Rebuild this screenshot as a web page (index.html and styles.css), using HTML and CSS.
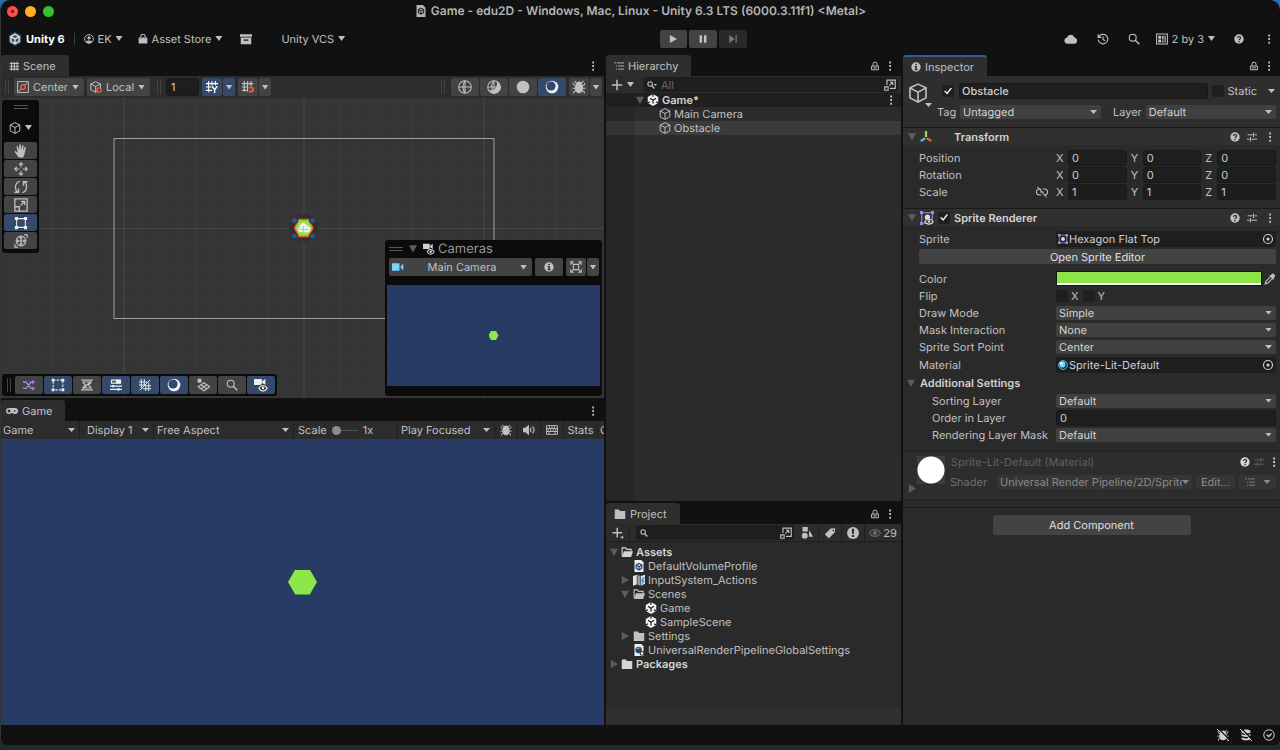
FILE: index.html
```html
<!DOCTYPE html>
<html lang="en">
<head>
    <meta charset="UTF-8">
    <meta name="viewport" content="width=device-width, initial-scale=1.0">
    <title>Game - edu2D - Windows, Mac, Linux - Unity 6.3 LTS</title>
    <link rel="stylesheet" href="styles.css">
</head>
<body>
    <!-- icon sprite -->
    <svg class="sprite" aria-hidden="true">
        <symbol id="i-dots" viewBox="0 0 16 16"><path fill="currentColor" d="M7 2h2.4v2.6H7zM7 6.8h2.4v2.6H7zM7 11.6h2.4v2.6H7z"/></symbol>
        <symbol id="i-lock" viewBox="0 0 16 16"><path fill="none" stroke="currentColor" stroke-width="1.6" d="M2.5 8h11v6h-11zM4.8 8V5a3.2 3.2 0 0 1 6.4 0v2.5M5 11h6"/></symbol>
        <symbol id="i-logo" viewBox="0 0 16 16"><path fill="#46515e" d="M8 0l7 4v8l-7 4-7-4V4z"/><path fill="none" stroke="#dfe6ec" stroke-width="1.5" d="M8 2.6l4.8 2.7v5.4L8 13.4l-4.8-2.7V5.3zM8 8v5M8 8L3.5 5.5M8 8l4.5-2.5"/></symbol>
        <symbol id="i-unity" viewBox="0 0 16 16"><path fill="#f0f0f0" d="M8 0l7 4v8l-7 4-7-4V4z"/><path stroke="#1c1c1c" stroke-width="1.6" fill="none" d="M8 8.2v4.6M8 8.2L4 5.8M8 8.2l4-2.4M8 0v3.6M1 12l3-1.8M15 12l-3-1.8"/></symbol>
        <symbol id="i-doc" viewBox="0 0 16 16"><path fill="#b4b4b4" d="M2 0h8.500L14 3.500V16H2z"/><path fill="none" stroke="#222" stroke-width="1.4" d="M8 4.200l3.500 2v4L8 12.300l-3.500-2.100v-4zM8 8.200v4M8 8.200L4.500 6.200M8 8.200l3.500-2"/></symbol>
        <symbol id="i-user" viewBox="0 0 16 16"><circle cx="8" cy="8" r="7" fill="none" stroke="currentColor" stroke-width="1.5"/><circle cx="8" cy="6.3" r="2.6" fill="currentColor"/><path fill="currentColor" d="M3.300 12.500c1-3 8.400-3 9.400 0A6.500 6.500 0 0 1 8 14.500a6.500 6.500 0 0 1-4.700-2z"/></symbol>
        <symbol id="i-bag" viewBox="0 0 16 16"><path fill="currentColor" d="M1 5.500h14V15H1z"/><path fill="none" stroke="currentColor" stroke-width="1.7" d="M4.500 7V4a3.500 3.500 0 0 1 7 0v3"/><path stroke="#111" stroke-width="1" d="M4.500 6v2M11.500 6v2"/></symbol>
        <symbol id="i-archive" viewBox="0 0 16 16"><path fill="currentColor" fill-rule="evenodd" d="M0 1.500h16V5H0zM1 6h14v9H1zm4 2.500v1.800h6V8.500z"/></symbol>
        <symbol id="i-play" viewBox="0 0 16 16"><path fill="currentColor" d="M3 1.500l11.500 6.500L3 14.500z"/></symbol>
        <symbol id="i-pause" viewBox="0 0 16 16"><path fill="currentColor" d="M2.500 2h4v12h-4zM9.500 2h4v12h-4z"/></symbol>
        <symbol id="i-step" viewBox="0 0 16 16"><path fill="currentColor" d="M2 1.500l9 6.500-9 6.500zM12 1.500h2v13h-2z"/></symbol>
        <symbol id="i-cloud" viewBox="0 0 16 16"><path fill="currentColor" d="M4 13.500a3.700 3.700 0 0 1-.6-7.300A4.600 4.600 0 0 1 12 6.300a3.700 3.700 0 0 1 .3 7.200z"/></symbol>
        <symbol id="i-history" viewBox="0 0 16 16"><path fill="none" stroke="currentColor" stroke-width="1.5" d="M2.200 5.500a6.400 6.400 0 1 1-.5 3.500M1.500 1.500v4.300h4.300M8 4.500V8.500l3 1.800"/></symbol>
        <symbol id="i-search" viewBox="0 0 16 16"><circle cx="6.3" cy="6.3" r="4.6" fill="none" stroke="currentColor" stroke-width="1.5"/><path stroke="currentColor" stroke-width="1.9" d="M9.700 9.700L15 15"/></symbol>
        <symbol id="i-search-small" viewBox="0 0 16 16"><circle cx="5" cy="6.5" r="3.6" fill="none" stroke="currentColor" stroke-width="1.7"/><path stroke="currentColor" stroke-width="2.2" d="M7.600 9.200l4.200 4.300"/></symbol>
        <symbol id="i-search-drop" viewBox="0 0 16 16"><use href="#i-search-small"/><path fill="currentColor" d="M10.500 6.500H16l-2.700 3z"/></symbol>
        <symbol id="i-layout" viewBox="0 0 16 16"><path fill="none" stroke="currentColor" stroke-width="1.4" d="M.8 1.300h14.400v13.400H.8z"/><path fill="currentColor" d="M3 3.500h4v4H3zM3 8.800h4v3.700H3zM8.200 3.500h2v5h-2zM11.400 3.500H13v9h-1.600zM8.200 10h2v2.500h-2z"/></symbol>
        <symbol id="i-help" viewBox="0 0 16 16"><circle cx="8" cy="8" r="7.5" fill="currentColor"/><path fill="none" stroke="#222" stroke-width="1.9" d="M5.500 6.400c0-3.200 5-3.200 5-.2 0 1.900-2.500 1.700-2.500 3.600"/><path fill="#222" d="M7 11h2v2H7z"/></symbol>
        <symbol id="i-info" viewBox="0 0 16 16"><circle cx="8" cy="8" r="7.5" fill="currentColor"/><path fill="#2a2a2a" d="M6.900 2.900h2.400v2.300H6.900zM5.800 6.400h3.500v5h1.200V13H5.700v-1.600h1.200V8H5.800z"/></symbol>
        <symbol id="i-alert" viewBox="0 0 16 16"><circle cx="8" cy="8" r="6.8" fill="currentColor"/><path fill="#222" d="M6.800 3.200h2.400l-.3 5.800H7.100zM6.900 10.400h2.200v2.200H6.900z"/></symbol>
        <symbol id="i-hash" viewBox="0 0 16 16"><path stroke="currentColor" stroke-width="1.7" d="M4 1v14M8.500 1v14M13 1v14M1 4h15M1 8.500h15M1 13h15"/></symbol>
        <symbol id="i-center" viewBox="0 0 16 16"><path fill="none" stroke="#c4c4c4" stroke-width="1.3" d="M.8.8h14.400v14.400H.8zM2.500 13.500l3-3M10.500 5.500l3-3"/><circle cx="8" cy="8" r="3" fill="none" stroke="#f0603a" stroke-width="1.9"/></symbol>
        <symbol id="i-local" viewBox="0 0 16 16"><path fill="none" stroke="#c4c4c4" stroke-width="1.3" d="M7.500 1L14 4v7l-6.500 4L1 11.500V4zM1 4l6.500 3.300L14 4M7.500 7.300V15"/><circle cx="12" cy="12" r="2.8" fill="#444" stroke="#f0603a" stroke-width="1.8"/></symbol>
        <symbol id="i-cube" viewBox="0 0 16 16"><path fill="none" stroke="currentColor" stroke-width="1.3" d="M8 .9l6.400 3v8L8 15.200l-6.400-3.300v-8zM1.600 3.900L8 7.300l6.400-3.400M8 7.300v7.900"/></symbol>
        <symbol id="i-gridy" viewBox="0 0 16 16"><path stroke="#fff" stroke-width="1.4" d="M3.500 0v15M8 0v6M12.500 0v6M0 3.500h16M0 8h7M0 12.500h8"/><path fill="none" stroke="#fff" stroke-width="2" d="M8 7l3.500 4.500L15 7M11.500 11v5"/></symbol>
        <symbol id="i-snap" viewBox="0 0 16 16"><path stroke="#c4c4c4" stroke-width="1.5" d="M3 0v14M7.500 0v14M12 0v7M0 3.500h15M0 8h8M0 12.500h7"/><path fill="none" stroke="#f0603a" stroke-width="2.4" d="M9.500 8.800h3a2.600 2.600 0 0 1 0 5.200h-3"/></symbol>
        <symbol id="i-wire" viewBox="0 0 16 16"><circle cx="8" cy="8" r="7.2" fill="none" stroke="currentColor" stroke-width="1.2"/><path fill="none" stroke="currentColor" stroke-width="1.2" d="M1 8h14M8 1v14M8 1c-3 3.500-3 10.500 0 14"/></symbol>
        <symbol id="i-shaded" viewBox="0 0 16 16"><path fill="currentColor" d="M11 1.500A7.300 7.300 0 1 1 1.500 11Q5 12.500 8.500 10.500 12.500 7.500 11 1.500z"/><circle cx="8" cy="8" r="7.2" fill="none" stroke="currentColor" stroke-width="1.2"/><path fill="none" stroke="currentColor" stroke-width="1.2" d="M1 8h10M8 1v10M8 1C5.500 3.500 5 8 6 11.500"/></symbol>
        <symbol id="i-solid" viewBox="0 0 16 16"><circle cx="8" cy="8" r="7.2" fill="currentColor"/></symbol>
        <symbol id="i-moon" viewBox="0 0 16 16"><circle cx="8" cy="8" r="7.2" fill="#efefef"/><circle cx="6.9" cy="6.9" r="5.2" fill="#30486d"/></symbol>
        <symbol id="i-bug" viewBox="0 0 16 16"><ellipse cx="8" cy="9.2" rx="4.8" ry="5.8" fill="currentColor"/><path fill="currentColor" d="M4.500 5C4.500.8 11.500.8 11.500 5z"/><path fill="none" stroke="currentColor" stroke-width="1.2" d="M5 4L3 1M11 4l2-3M4.500 7L1.500 5V3M11.500 7l3-2V3M4 9.500H.5M12 9.500h3.500M4.500 12L2 13.500V15.500M11.500 12l2.500 1.500v2"/></symbol>
        <symbol id="i-hand" viewBox="0 0 16 16"><path fill="currentColor" d="M5.500 15.500L1 9.300c-.5-1.200.7-1.700 1.500-.8l1.800 1.800L3 3.400c-.2-1.300 1.200-1.500 1.500-.3L5.800 7 6 1.500C6-.1 7.700-.1 7.800 1.500L8.200 7l1-5c.3-1.300 1.800-1 1.600.4L10.500 7.400l1.600-3.700c.5-1 1.700-.6 1.400.6L12 11.500l-1.500 4z"/></symbol>
        <symbol id="i-move" viewBox="0 0 16 16"><path fill="none" stroke="currentColor" stroke-width="1.3" d="M8 1v5M8 10v5M1 8h5M10 8h5M5.700 3.200L8 .9l2.300 2.300M5.700 12.800L8 15.100l2.300-2.300M3.200 5.700L.9 8l2.300 2.300M12.800 5.700L15.100 8l-2.300 2.300"/></symbol>
        <symbol id="i-rotate" viewBox="0 0 16 16"><path fill="none" stroke="currentColor" stroke-width="1.5" d="M6.500 1.500C1 3 0 10.500 4.500 14M.5 14h4.700V9.500M9.500 14.500C15 13 16 5.500 11.500 2M15.500 2h-4.700v4.500"/></symbol>
        <symbol id="i-scale" viewBox="0 0 16 16"><path fill="none" stroke="currentColor" stroke-width="1.5" d="M1 1h14v14H1zM1 10h5v5M7.500 8.500L12 4M8 3.800h4.200V8"/></symbol>
        <symbol id="i-rect" viewBox="0 0 16 16"><path fill="none" stroke="currentColor" stroke-width="1.2" d="M3 3h10v10H3z"/><path fill="currentColor" d="M1 1h3.500v3.500H1zM11.500 1H15v3.500h-3.500zM1 11.500h3.500V15H1zM11.500 11.500H15V15h-3.500z"/></symbol>
        <symbol id="i-rectdash" viewBox="0 0 16 16"><path fill="none" stroke="currentColor" stroke-width="1.3" stroke-dasharray="2.500 1.500" d="M2.500 2.500h11v11h-11z"/><path fill="currentColor" d="M.8.8H4V4H.8zM12 .8h3.200V4H12zM.8 12H4v3.200H.8zM12 12h3.200v3.200H12z"/></symbol>
        <symbol id="i-transform" viewBox="0 0 16 16"><circle cx="8" cy="8" r="5.5" fill="none" stroke="currentColor" stroke-width="1.3"/><path fill="none" stroke="currentColor" stroke-width="1.3" d="M8 3v10M3 8h10M6.500 5L8 3.500 9.500 5M6.500 11L8 12.500 9.500 11M5 6.500L3.500 8 5 9.500M11 6.500L12.500 8 11 9.500M11.500 1H15v3.500M4.500 15H1v-3.500"/></symbol>
        <symbol id="i-cameye" viewBox="0 0 16 16"><path fill="currentColor" d="M0 1h9v7H0zM9.500 3.500L13 1v7L9.500 5.800z"/><path fill="#222" d="M4.500 11c2-5 9-5 11 0-2 5.500-9 5.500-11 0z"/><path fill="none" stroke="currentColor" stroke-width="1.4" d="M5.500 11.500c2-3.800 7.500-3.800 9.500 0-2 4.500-7.500 4.500-9.500 0z"/><circle cx="10.3" cy="11.5" r="1.6" fill="currentColor"/></symbol>
        <symbol id="i-camera" viewBox="0 0 16 16"><path fill="#7bd3fb" d="M0 3h10v10H0zM11 8l4-5v10z"/></symbol>
        <symbol id="i-frame" viewBox="0 0 16 16"><path fill="none" stroke="currentColor" stroke-width="1.4" d="M1 5V1h4M11 1h4v4M15 11v4h-4M5 15H1v-4M4.500 4.500h7v7h-7zM1 1l3.500 3.500M15 1l-3.500 3.500M1 15l3.500-3.500M15 15l-3.500-3.500"/></symbol>
        <symbol id="i-shuffle" viewBox="0 0 16 16"><path fill="none" stroke="#a389ee" stroke-width="1.8" d="M0 4h4l7 8.500h4M0 12.500h4L11 4h4"/><path fill="#a389ee" d="M12.500 1L16 4l-3.500 3zM12.500 9.500l3.500 3-3.500 3z"/></symbol>
        <symbol id="i-measure" viewBox="0 0 16 16"><path fill="none" stroke="currentColor" stroke-width="1.5" d="M0 1.500h16M0 14.500h16M2 4h12M2 12h12M2 4l4 4-4 4M14 4l-4 4 4 4M3 13L13 3"/></symbol>
        <symbol id="i-sliders" viewBox="0 0 16 16"><path fill="none" stroke="currentColor" stroke-width="1.6" d="M2 1.500h12v4H2zM0 9.500h16M0 13.800h16"/><path fill="currentColor" d="M8 1h6v5H8zM3 8h2.500v3H3zM10 12h2.500v3.500H10z"/></symbol>
        <symbol id="i-gridcut" viewBox="0 0 16 16"><path fill="none" stroke="currentColor" stroke-width="1.3" d="M3 0v12M7 0v9M0 4h11M0 8h8M1 15L15 1M9 16V9M13 16V5M8 9h8M5 13h11"/></symbol>
        <symbol id="i-tiles" viewBox="0 0 16 16"><circle cx="4" cy="3" r="2.5" fill="currentColor"/><path fill="none" stroke="currentColor" stroke-width="1.3" d="M9 5.500l6.500 4.500L9 14.500 2.500 10zM5.700 7.800l6.600 4.500M12.300 7.800l-6.600 4.500"/></symbol>
        <symbol id="i-list" viewBox="0 0 16 16"><path stroke="currentColor" stroke-width="1.4" d="M0 3h3M4.500 3H16M3 8h2M6.500 8H16M3 13h2M6.500 13H16"/></symbol>
        <symbol id="i-plus" viewBox="0 0 16 16"><path stroke="currentColor" stroke-width="2" d="M8 1v14M1 8h14"/></symbol>
        <symbol id="i-plus-drop" viewBox="0 0 16 16"><path stroke="currentColor" stroke-width="2" d="M7 1v13M.5 7.500h13"/><path fill="currentColor" d="M11 12.500h5L13.500 16z"/></symbol>
        <symbol id="i-popout" viewBox="0 0 16 16"><path fill="none" stroke="currentColor" stroke-width="1.5" d="M4 8V1.500h11v11H8M1 10.500h4.500V15H1zM7 8.800L11.500 4.500M8 4.300h3.700V8"/></symbol>
        <symbol id="i-pad" viewBox="0 0 16 16"><path fill="currentColor" fill-rule="evenodd" d="M4 4h8a4 4 0 0 1 0 8c-2 0-2-1.500-4-1.500S6 12 4 12a4 4 0 0 1 0-8zm0 2a2 2 0 1 0 .01 4A2 2 0 0 0 4 6zm6.500 1v2h2V7z"/></symbol>
        <symbol id="i-speaker" viewBox="0 0 16 16"><path fill="currentColor" d="M0 5h3l5-4v14l-5-4H0z"/><path fill="none" stroke="currentColor" stroke-width="1.6" d="M10.300 5v6M12.500 3.500c3 2 3 7 0 9"/></symbol>
        <symbol id="i-keys" viewBox="0 0 16 16"><path fill="none" stroke="currentColor" stroke-width="1.2" d="M.7 2.200h14.600v11.600H.7zM1 6h14M1 10h14M4.500 2v4M8 2v4M11.500 2v4M3 6v4M6.300 6v4M9.600 6v4M13 6v4M4 10v4M12 10v4"/></symbol>
        <symbol id="i-axes" viewBox="0 0 16 16"><path stroke="#95e04c" stroke-width="3" d="M8 0v8"/><path stroke="#5cb8e8" stroke-width="3" d="M7 9.500l-6 4"/><path stroke="#f0603a" stroke-width="3" d="M9 9.500l6 4"/></symbol>
        <symbol id="i-preset" viewBox="0 0 16 16"><path stroke="currentColor" stroke-width="1.6" d="M1 4.500h8M12 4.500h4M10.500 1v7M0 11.500h4M7 11.500h9M5.500 8v7"/></symbol>
        <symbol id="i-unlink" viewBox="0 0 16 16"><path fill="none" stroke="currentColor" stroke-width="1.4" d="M7 4H4.500a3.700 3.700 0 0 0 0 8H7M9 4h2.500a3.700 3.700 0 0 1 0 8M5.500 8H10M2 1l12 14"/></symbol>
        <symbol id="i-srender" viewBox="0 0 16 16"><path fill="none" stroke="#a389ee" stroke-width="1.3" d="M2 2h12v12H2z"/><path fill="#a389ee" d="M0 0h3.400v3.400H0zM12.600 0H16v3.400h-3.400zM0 12.600h3.400V16H0z"/><circle cx="8.5" cy="7" r="3" fill="#ddd"/><path fill="#303030" stroke="#ddd" stroke-width="1.3" d="M5.500 12c2-3.500 7.500-3.500 9.500 0-2 4-7.500 4-9.500 0z"/><circle cx="10.3" cy="12" r="1.5" fill="#ddd"/></symbol>
        <symbol id="i-spr" viewBox="0 0 16 16"><path fill="none" stroke="#a389ee" stroke-width="1.3" d="M2 2h12v12H2z"/><path fill="#a389ee" d="M0 0h4v4H0zM12 0h4v4h-4zM0 12h4v4H0zM12 12h4v4h-4z"/><circle cx="8" cy="8" r="3.2" fill="#ddd"/></symbol>
        <symbol id="i-target" viewBox="0 0 16 16"><circle cx="8" cy="8" r="6" fill="none" stroke="currentColor" stroke-width="1.5"/><circle cx="8" cy="8" r="2.1" fill="currentColor"/></symbol>
        <symbol id="i-dropper" viewBox="0 0 16 16"><path fill="currentColor" d="M10 1.500c2-2.500 6.500 1.500 4 4L12.500 7l1 1-1.300 1.300-5.500-5.500L8 2.500l1 .8z"/><path fill="none" stroke="currentColor" stroke-width="1.5" d="M7.800 5.700L2.500 11 1.500 14.500 5 13.500l5.300-5.300"/></symbol>
        <symbol id="i-ball" viewBox="0 0 16 16"><circle cx="8" cy="8" r="7" fill="#14252f" stroke="#7bd3fb" stroke-width="1.3"/><circle cx="7" cy="7" r="5" fill="#7bd3fb"/><circle cx="5.5" cy="5.5" r="1.8" fill="#fff"/></symbol>
        <symbol id="i-folder" viewBox="0 0 16 16"><path fill="currentColor" d="M1 2h5.500L8 4h7v10.500H1z"/></symbol>
        <symbol id="i-folder-open" viewBox="0 0 16 16"><path fill="none" stroke="currentColor" stroke-width="1.5" d="M1.500 13V2.500h4.500l1.500 2h6V7"/><path fill="currentColor" d="M4 7h12l-2.500 7.500H1z"/></symbol>
        <symbol id="i-profile" viewBox="0 0 16 16"><path fill="#f0f0f0" d="M2 0h9l3 3v13H2z"/><path fill="#a9c8e8" stroke="#26415f" stroke-width="1.5" d="M8 4.500l3.800 2v4.500L8 13.500 4.200 11V6.500zM4.200 6.500L8 9l3.800-2.500M8 9v4.500"/></symbol>
        <symbol id="i-rpasset" viewBox="0 0 16 16"><path fill="#f0f0f0" d="M2 0h9l3 3v13H2z"/><circle cx="7.5" cy="8" r="4.3" fill="#24466e"/><path fill="#7bb8f0" d="M5 7c0-3 4-3 4-1z"/><circle cx="12" cy="12.5" r="2.5" fill="#eee" stroke="#333" stroke-width="1.4"/></symbol>
        <symbol id="i-actions" viewBox="0 0 16 16"><path fill="#e4e4e4" d="M0 2.500l5-1.500v13l-5 1.500z"/><path fill="#9a9a9a" d="M5.800 1l4 1.500v13l-4-1.500z"/><path fill="#e4e4e4" d="M10.500 2.500L16 1v12l-5.500 2.500z"/><path fill="#2f9be0" d="M13.500 4l-3.500 6h2.500L11 16l5-7.500h-2.500L15.500 4z"/></symbol>
        <symbol id="i-shapes" viewBox="0 0 16 16"><path fill="currentColor" d="M2 0h7v6H2zM11 4l5 9h-5.500z"/><circle cx="5" cy="11.5" r="4" fill="currentColor"/></symbol>
        <symbol id="i-tag" viewBox="0 0 16 16"><path fill="currentColor" fill-rule="evenodd" d="M9 2l6-.5L14.500 7l-8 8L1 9.800zm2.500 1.500v2h2v-2z"/></symbol>
        <symbol id="i-eye" viewBox="0 0 16 16"><path fill="none" stroke="currentColor" stroke-width="1.5" d="M.7 8c3-6 11.600-6 14.600 0-3 6-11.600 6-14.600 0z"/><circle cx="8" cy="8" r="3" fill="currentColor"/></symbol>
        <symbol id="i-bugoff" viewBox="0 0 16 16"><use href="#i-bug"/><path stroke="#111" stroke-width="1.6" d="M2.500 0l13.500 13.500"/><path stroke="currentColor" stroke-width="1.3" d="M0 0l16 16"/></symbol>
        <symbol id="i-dboff" viewBox="0 0 16 16"><path fill="currentColor" d="M2 3c0-3 12-3 12 0v1.500c-1 2-11 2-12 0zM2 6.500c3 2 9 2 12 0V9c-2 2-10 2-12 0zM2 11c3 2 9 2 12 0v2c-1 3-11 3-12 0z"/><path stroke="#111" stroke-width="1.6" d="M2.500 0l13.500 13.500"/><path stroke="currentColor" stroke-width="1.3" d="M0 0l16 16"/></symbol>
        <symbol id="i-ok" viewBox="0 0 16 16"><circle cx="8" cy="8" r="7" fill="none" stroke="currentColor" stroke-width="1.3"/><path fill="none" stroke="currentColor" stroke-width="1.7" d="M4.800 7.500L7.500 10l4-4"/></symbol>
    </svg>

    <div class="window">
        <header class="titlebar">
            <div class="lights"><span class="light close"></span><span class="light min"></span><span class="light max"></span></div>
            <h1 class="title"><svg class="ico"><use href="#i-doc"/></svg>Game - edu2D - Windows, Mac, Linux - Unity 6.3 LTS (6000.3.11f1) &lt;Metal&gt;</h1>
        </header>

        <nav class="topbar">
            <div class="topbar-left">
                <span class="brand"><svg class="ico big"><use href="#i-logo"/></svg>Unity 6</span>
                <span class="sep"></span>
                <button class="flat"><svg class="ico small"><use href="#i-user"/></svg>EK<span class="caret"></span></button>
                <button class="flat"><svg class="ico small"><use href="#i-bag"/></svg>Asset Store<span class="caret"></span></button>
                <button class="flat packages" aria-label="Package Manager"><svg class="ico"><use href="#i-archive"/></svg></button>
                <button class="flat vcs">Unity VCS<span class="caret"></span></button>
            </div>
            <div class="playbar">
                <button class="btn" aria-label="Play"><svg class="ico small"><use href="#i-play"/></svg></button>
                <button class="btn" aria-label="Pause"><svg class="ico small"><use href="#i-pause"/></svg></button>
                <button class="btn off" aria-label="Step"><svg class="ico small"><use href="#i-step"/></svg></button>
            </div>
            <div class="topbar-right">
                <button class="flat" aria-label="Cloud"><svg class="ico big"><use href="#i-cloud"/></svg></button>
                <button class="flat" aria-label="History"><svg class="ico"><use href="#i-history"/></svg></button>
                <button class="flat" aria-label="Search"><svg class="ico"><use href="#i-search"/></svg></button>
                <button class="flat layout"><svg class="ico"><use href="#i-layout"/></svg>2 by 3<span class="caret"></span></button>
                <button class="flat" aria-label="Help"><svg class="ico small"><use href="#i-help"/></svg></button>
                <button class="flat" aria-label="More"><svg class="ico"><use href="#i-dots"/></svg></button>
            </div>
        </nav>

        <main class="workspace">
            <div class="column left">
                <section class="panel scene">
                    <div class="tabs">
                        <h2 class="tab"><svg class="ico small"><use href="#i-hash"/></svg>Scene</h2>
                        <button class="flat" aria-label="Scene menu"><svg class="ico"><use href="#i-dots"/></svg></button>
                    </div>
                    <div class="scene-tools">
                        <span class="grip"></span>
                        <button class="btn text"><svg class="ico"><use href="#i-center"/></svg>Center<span class="caret"></span></button>
                        <button class="btn text"><svg class="ico"><use href="#i-local"/></svg>Local<span class="caret"></span></button>
                        <span class="grip mid"></span>
                        <input class="field snap-size" type="text" value="1" aria-label="Grid size">
                        <div class="pair">
                            <button class="btn on" aria-label="Grid"><svg class="ico"><use href="#i-gridy"/></svg></button>
                            <button class="btn on drop" aria-label="Grid options"><span class="caret"></span></button>
                        </div>
                        <div class="pair">
                            <button class="btn" aria-label="Snap"><svg class="ico"><use href="#i-snap"/></svg></button>
                            <button class="btn drop" aria-label="Snap options"><span class="caret"></span></button>
                        </div>
                        <span class="grip end"></span>
                        <div class="strip">
                            <button class="btn" aria-label="Wireframe"><svg class="ico big"><use href="#i-wire"/></svg></button>
                            <button class="btn" aria-label="Shaded wireframe"><svg class="ico big"><use href="#i-shaded"/></svg></button>
                            <button class="btn" aria-label="Unlit"><svg class="ico big"><use href="#i-solid"/></svg></button>
                            <button class="btn on" aria-label="Shaded"><svg class="ico big"><use href="#i-moon"/></svg></button>
                        </div>
                        <div class="pair">
                            <button class="btn" aria-label="Debug"><svg class="ico big"><use href="#i-bug"/></svg></button>
                            <button class="btn drop" aria-label="Debug options"><span class="caret"></span></button>
                        </div>
                    </div>
                    <div class="canvas">
                        <svg class="grid" viewBox="0 0 604 300" preserveAspectRatio="xMidYMid slice">
                            <defs>
                                <pattern id="minor" x="15" y="4" width="18" height="18" patternUnits="userSpaceOnUse"><path d="M.5 0v18M0 .5h18" stroke="#3a3a3a" fill="none"/></pattern>
                                <pattern id="major" x="123" y="130" width="180" height="180" patternUnits="userSpaceOnUse"><path d="M.5 0v180M0 .5h180" stroke="#464646" fill="none"/></pattern>
                            </defs>
                            <rect width="604" height="300" fill="url(#minor)"/>
                            <rect width="604" height="300" fill="url(#major)"/>
                            <path d="M113.500 40.500h380v180h-380z" fill="none" stroke="#a0a0a0"/>
                            <circle cx="303" cy="130" r="14" fill="#303030"/>
                            <path d="M294 130l4.500-8.500h9.500l4.500 8.500-4.500 8.500h-9.500z" fill="#8ce446" stroke="#f0541e" stroke-width="1.5"/>
                            <path d="M299 134a3 3 0 0 1 0-5c0-5 7-5 8-1 4 1 4 6 0 6.500z" fill="#e8f0ea"/>
                            <path d="M303 128v8M299 131.500h9" stroke="#b9c7be"/>
                            <g fill="#36527f" stroke="#20304c"><circle cx="294" cy="122.500" r="3"/><circle cx="312" cy="122.500" r="3"/><circle cx="294" cy="138" r="3"/><circle cx="312" cy="138" r="3"/></g>
                        </svg>

                        <div class="overlay tools">
                            <span class="handle"></span>
                            <button class="flat view" aria-label="View options"><svg class="ico"><use href="#i-cube"/></svg><span class="caret"></span></button>
                            <button class="btn" aria-label="View"><svg class="ico big"><use href="#i-hand"/></svg></button>
                            <button class="btn" aria-label="Move"><svg class="ico big"><use href="#i-move"/></svg></button>
                            <button class="btn" aria-label="Rotate"><svg class="ico big"><use href="#i-rotate"/></svg></button>
                            <button class="btn" aria-label="Scale"><svg class="ico big"><use href="#i-scale"/></svg></button>
                            <button class="btn on" aria-label="Rect"><svg class="ico big"><use href="#i-rect"/></svg></button>
                            <button class="btn" aria-label="Transform"><svg class="ico big"><use href="#i-transform"/></svg></button>
                        </div>

                        <div class="overlay modes">
                            <span class="grip"></span>
                            <button class="btn" aria-label="Random"><svg class="ico"><use href="#i-shuffle"/></svg></button>
                            <button class="btn on" aria-label="Bounds"><svg class="ico big"><use href="#i-rectdash"/></svg></button>
                            <button class="btn" aria-label="Measure"><svg class="ico"><use href="#i-measure"/></svg></button>
                            <button class="btn on" aria-label="Options"><svg class="ico"><use href="#i-sliders"/></svg></button>
                            <button class="btn on" aria-label="Grid"><svg class="ico"><use href="#i-gridcut"/></svg></button>
                            <button class="btn on" aria-label="Lighting"><svg class="ico big"><use href="#i-moon"/></svg></button>
                            <button class="btn" aria-label="Tiles"><svg class="ico big"><use href="#i-tiles"/></svg></button>
                            <button class="btn" aria-label="Search"><svg class="ico"><use href="#i-search"/></svg></button>
                            <button class="btn on" aria-label="Cameras"><svg class="ico big"><use href="#i-cameye"/></svg></button>
                        </div>

                        <div class="overlay cameras">
                            <div class="cameras-title"><span class="handle"></span><span class="fold open"></span><svg class="ico"><use href="#i-cameye"/></svg>Cameras</div>
                            <div class="cameras-tools">
                                <button class="btn pick"><svg class="ico"><use href="#i-camera"/></svg><span class="pick-name">Main Camera</span><span class="caret"></span></button>
                                <button class="btn wide" aria-label="Info"><svg class="ico small"><use href="#i-info"/></svg></button>
                                <div class="pair">
                                    <button class="btn" aria-label="Frame"><svg class="ico"><use href="#i-frame"/></svg></button>
                                    <button class="btn drop" aria-label="Frame options"><span class="caret"></span></button>
                                </div>
                            </div>
                            <div class="preview"><span class="hexagon tiny"></span></div>
                        </div>
                    </div>
                </section>

                <section class="panel game">
                    <div class="tabs">
                        <h2 class="tab"><svg class="ico"><use href="#i-pad"/></svg>Game</h2>
                        <button class="flat" aria-label="Game menu"><svg class="ico"><use href="#i-dots"/></svg></button>
                    </div>
                    <div class="game-tools">
                        <div class="select w-game"><select aria-label="View"><option>Game</option></select></div>
                        <div class="select w-display"><select aria-label="Display"><option>Display 1</option></select></div>
                        <div class="select w-aspect"><select aria-label="Aspect"><option>Free Aspect</option></select></div>
                        <label class="zoom">Scale<input type="range" min="1" max="5" value="1"><span>1x</span></label>
                        <div class="select w-focus"><select aria-label="Focus"><option>Play Focused</option></select></div>
                        <button class="cell" aria-label="Debug"><svg class="ico"><use href="#i-bug"/></svg></button>
                        <button class="cell" aria-label="Audio"><svg class="ico"><use href="#i-speaker"/></svg></button>
                        <button class="cell" aria-label="Shortcuts"><svg class="ico"><use href="#i-keys"/></svg></button>
                        <button class="cell stats">Stats</button>
                        <button class="cell gizmos">Gizmos</button>
                    </div>
                    <div class="game-view"><span class="hexagon"></span></div>
                </section>
            </div>

            <div class="column middle">
                <section class="panel hierarchy">
                    <div class="tabs">
                        <h2 class="tab"><svg class="ico small"><use href="#i-list"/></svg>Hierarchy</h2>
                        <button class="flat" aria-label="Lock"><svg class="ico small"><use href="#i-lock"/></svg></button>
                        <button class="flat" aria-label="Hierarchy menu"><svg class="ico"><use href="#i-dots"/></svg></button>
                    </div>
                    <div class="search-tools">
                        <button class="flat add" aria-label="Create"><svg class="ico"><use href="#i-plus"/></svg><span class="caret"></span></button>
                        <label class="search"><svg class="ico small"><use href="#i-search-drop"/></svg><input type="text" placeholder="All" aria-label="Search hierarchy"><svg class="ico"><use href="#i-popout"/></svg></label>
                    </div>
                    <ul class="tree objects">
                        <li class="root"><span class="fold open"></span><svg class="ico"><use href="#i-unity"/></svg><span class="name">Game*</span><svg class="ico menu"><use href="#i-dots"/></svg></li>
                        <li class="child"><svg class="ico"><use href="#i-cube"/></svg>Main Camera</li>
                        <li class="child selected"><svg class="ico"><use href="#i-cube"/></svg>Obstacle</li>
                    </ul>
                </section>

                <section class="panel project">
                    <div class="tabs">
                        <h2 class="tab"><svg class="ico"><use href="#i-folder"/></svg>Project</h2>
                        <button class="flat" aria-label="Lock"><svg class="ico small"><use href="#i-lock"/></svg></button>
                        <button class="flat" aria-label="Project menu"><svg class="ico"><use href="#i-dots"/></svg></button>
                    </div>
                    <div class="search-tools ruled">
                        <button class="cell plus" aria-label="Create"><svg class="ico"><use href="#i-plus-drop"/></svg></button>
                        <label class="search"><svg class="ico small"><use href="#i-search-small"/></svg><input type="text" aria-label="Search project"><svg class="ico"><use href="#i-popout"/></svg></label>
                        <button class="cell" aria-label="By type"><svg class="ico"><use href="#i-shapes"/></svg></button>
                        <button class="cell" aria-label="By label"><svg class="ico"><use href="#i-tag"/></svg></button>
                        <button class="cell" aria-label="Log"><svg class="ico big"><use href="#i-alert"/></svg></button>
                        <button class="cell count"><svg class="ico"><use href="#i-eye"/></svg>29</button>
                    </div>
                    <ul class="tree assets">
                        <li class="bold"><span class="fold open"></span><svg class="ico"><use href="#i-folder-open"/></svg>Assets</li>
                        <li class="l1"><svg class="ico"><use href="#i-profile"/></svg>DefaultVolumeProfile</li>
                        <li class="l1"><span class="fold"></span><svg class="ico"><use href="#i-actions"/></svg>InputSystem_Actions</li>
                        <li class="l1"><span class="fold open"></span><svg class="ico"><use href="#i-folder-open"/></svg>Scenes</li>
                        <li class="l2"><svg class="ico"><use href="#i-unity"/></svg>Game</li>
                        <li class="l2"><svg class="ico"><use href="#i-unity"/></svg>SampleScene</li>
                        <li class="l1"><span class="fold"></span><svg class="ico"><use href="#i-folder"/></svg>Settings</li>
                        <li class="l1"><svg class="ico"><use href="#i-rpasset"/></svg>UniversalRenderPipelineGlobalSettings</li>
                        <li class="bold"><span class="fold"></span><svg class="ico"><use href="#i-folder"/></svg>Packages</li>
                    </ul>
                    <div class="project-foot"></div>
                </section>
            </div>

            <section class="panel inspector">
                <div class="tabs">
                    <h2 class="tab focused"><svg class="ico small"><use href="#i-info"/></svg>Inspector</h2>
                    <button class="flat" aria-label="Lock"><svg class="ico small"><use href="#i-lock"/></svg></button>
                    <button class="flat" aria-label="Inspector menu"><svg class="ico"><use href="#i-dots"/></svg></button>
                </div>

                <div class="object-head">
                    <div class="object-icon"><svg class="ico huge"><use href="#i-cube"/></svg><span class="caret"></span></div>
                    <div class="object-rows">
                        <div class="object-row">
                            <input class="tick" type="checkbox" checked aria-label="Active">
                            <input class="field name" type="text" value="Obstacle" aria-label="Name">
                            <label class="static"><input class="tick" type="checkbox">Static</label>
                            <span class="caret"></span>
                        </div>
                        <div class="object-row">
                            <label class="tag-label" for="tag">Tag</label>
                            <div class="select box w-tag"><select id="tag"><option>Untagged</option></select></div>
                            <label class="layer-label" for="layer">Layer</label>
                            <div class="select box grow"><select id="layer"><option>Default</option></select></div>
                        </div>
                    </div>
                </div>

                <div class="comp-head">
                    <span class="fold open"></span><svg class="ico"><use href="#i-axes"/></svg><span class="tick-gap"></span>
                    <h3>Transform</h3>
                    <svg class="ico small"><use href="#i-help"/></svg><svg class="ico small"><use href="#i-preset"/></svg><svg class="ico"><use href="#i-dots"/></svg>
                </div>
                <div class="comp-body">
                    <div class="prop"><span>Position</span><div class="vector"><label>X<input class="field" type="text" value="0"></label><label>Y<input class="field" type="text" value="0"></label><label>Z<input class="field" type="text" value="0"></label></div></div>
                    <div class="prop"><span>Rotation</span><div class="vector"><label>X<input class="field" type="text" value="0"></label><label>Y<input class="field" type="text" value="0"></label><label>Z<input class="field" type="text" value="0"></label></div></div>
                    <div class="prop"><span class="linked">Scale<svg class="ico"><use href="#i-unlink"/></svg></span><div class="vector"><label>X<input class="field" type="text" value="1"></label><label>Y<input class="field" type="text" value="1"></label><label>Z<input class="field" type="text" value="1"></label></div></div>
                </div>

                <div class="comp-head">
                    <span class="fold open"></span><svg class="ico big"><use href="#i-srender"/></svg><input class="tick" type="checkbox" checked aria-label="Enabled">
                    <h3>Sprite Renderer</h3>
                    <svg class="ico small"><use href="#i-help"/></svg><svg class="ico small"><use href="#i-preset"/></svg><svg class="ico"><use href="#i-dots"/></svg>
                </div>
                <div class="comp-body">
                    <div class="prop tall"><span>Sprite</span><div class="object-field"><svg class="ico small"><use href="#i-spr"/></svg><span>Hexagon Flat Top</span><button class="flat" aria-label="Pick sprite"><svg class="ico"><use href="#i-target"/></svg></button></div></div>
                    <button class="btn bar">Open Sprite Editor</button>
                    <div class="prop"><label for="color">Color</label><div class="color-field"><input id="color" type="color" value="#8ee446"><svg class="ico"><use href="#i-dropper"/></svg></div></div>
                    <div class="prop"><span>Flip</span><div class="flip"><label><input class="tick" type="checkbox">X</label><label><input class="tick" type="checkbox">Y</label></div></div>
                    <div class="prop"><label for="draw">Draw Mode</label><div class="select box"><select id="draw"><option>Simple</option></select></div></div>
                    <div class="prop"><label for="mask">Mask Interaction</label><div class="select box"><select id="mask"><option>None</option></select></div></div>
                    <div class="prop tall"><label for="sort">Sprite Sort Point</label><div class="select box"><select id="sort"><option>Center</option></select></div></div>
                    <div class="prop tall"><span>Material</span><div class="object-field"><svg class="ico small"><use href="#i-ball"/></svg><span>Sprite-Lit-Default</span><button class="flat" aria-label="Pick material"><svg class="ico"><use href="#i-target"/></svg></button></div></div>
                    <div class="subhead"><span class="fold open"></span>Additional Settings</div>
                    <div class="prop sub"><label for="slayer">Sorting Layer</label><div class="select box"><select id="slayer"><option>Default</option></select></div></div>
                    <div class="prop sub"><label for="order">Order in Layer</label><input class="field" id="order" type="text" value="0"></div>
                    <div class="prop sub"><label for="rmask">Rendering Layer Mask</label><div class="select box"><select id="rmask"><option>Default</option></select></div></div>
                </div>

                <div class="material">
                    <div class="material-side"><span class="swatch"></span><span class="fold"></span></div>
                    <div class="material-main">
                        <div class="material-title"><h3>Sprite-Lit-Default (Material)</h3><svg class="ico small help"><use href="#i-help"/></svg><svg class="ico small"><use href="#i-preset"/></svg><svg class="ico dots"><use href="#i-dots"/></svg></div>
                        <div class="shader-row">
                            <label for="shader">Shader</label>
                            <div class="select box"><select id="shader"><option>Universal Render Pipeline/2D/Sprite-Lit-Default</option></select></div>
                            <button class="btn edit">Edit...</button>
                            <button class="btn more" aria-label="Shader list"><svg class="ico small"><use href="#i-list"/></svg><span class="caret"></span></button>
                        </div>
                    </div>
                </div>
                <div class="add-area"><button class="btn add-component">Add Component</button></div>
            </section>
        </main>

        <footer class="statusbar">
            <button class="flat" aria-label="Debugger off"><svg class="ico"><use href="#i-bugoff"/></svg></button>
            <button class="flat" aria-label="Cache off"><svg class="ico"><use href="#i-dboff"/></svg></button>
            <button class="flat" aria-label="Ready"><svg class="ico"><use href="#i-ok"/></svg></button>
        </footer>
    </div>
</body>
</html>
```

FILE: styles.css
```css
* {
    box-sizing: border-box;
}
body {
    margin: 0;
    height: 100vh;
    padding-bottom: 5px;
    overflow: hidden;
    background: linear-gradient(#2b6cab 20px, #18241f 40px, #1f2b27);
    color: #c0c0c0;
    font-family: Inter, "Liberation Sans", sans-serif;
    font-size: 11px;
    line-height: 14px;
    text-rendering: geometricPrecision;
}
h1, h2, h3, ul {
    margin: 0;
    padding: 0;
    font-size: inherit;
    font-weight: normal;
}
button, input, select {
    margin: 0;
    padding: 0;
    border: 0;
    background: none;
    color: inherit;
    font: inherit;
    text-rendering: inherit;
    min-width: 0;
}
.sprite {
    display: none;
}
.ico {
    width: 12px;
    height: 12px;
    flex: none;
    display: block;
}
.ico.small {
    width: 10px;
    height: 10px;
}
.ico.big {
    width: 14px;
    height: 14px;
}
.ico.huge {
    width: 20px;
    height: 20px;
}
.caret {
    flex: none;
    width: 7px;
    height: 5px;
    background: #c0c0c0;
    clip-path: polygon(0 0, 100% 0, 50% 100%);
}
.fold {
    flex: none;
    width: 8px;
    height: 8px;
    background: #5c5c5c;
    clip-path: polygon(10% 0, 100% 50%, 10% 100%);
}
.fold.open {
    clip-path: polygon(0 10%, 100% 10%, 50% 100%);
}
.grip {
    flex: none;
    width: 4px;
    height: 14px;
    border: 1px solid #444;
    border-width: 0 1px;
}
.handle {
    width: 14px;
    height: 4px;
    border: 1px solid #555;
    border-width: 1px 0;
}

/* window */
.window {
    height: 100%;
    display: flex;
    flex-direction: column;
    background: #111;
    border-left: 1px solid #333;
    border-radius: 10px 10px 6px 6px;
    overflow: hidden;
}
.titlebar {
    height: 22px;
    flex: none;
    display: grid;
    grid-template-columns: 1fr auto 1fr;
    align-items: center;
}
.lights {
    display: flex;
    gap: 7px;
    padding-left: 6px;
}
.light {
    width: 11px;
    height: 11px;
    border-radius: 50%;
}
.close {
    background: radial-gradient(#7a0f0d 1px, #fc4c4c 2px);
}
.min {
    background: #fdb022;
}
.max {
    background: #35c12f;
}
.title {
    display: flex;
    align-items: center;
    gap: 4px;
    color: #b4b4b4;
    font-size: 12px;
    font-weight: 600;
}
.topbar {
    height: 33px;
    flex: none;
    display: grid;
    grid-template-columns: 658fr 87px 533fr;
    align-items: center;
}
.topbar-left, .topbar-right, .playbar, .brand {
    display: flex;
    align-items: center;
}
.topbar-left {
    padding-left: 7px;
    gap: 15px;
}
.brand {
    gap: 4px;
    color: #fff;
    font-weight: 700;
}
.sep {
    width: 1px;
    height: 12px;
    margin: 0 -6px;
    background: #3c3c3c;
}
.packages {
    margin-left: 3px;
}
.vcs {
    margin-left: 14px;
}
.playbar {
    gap: 2px;
}
.topbar-right {
    justify-content: flex-end;
    gap: 19px;
    padding-right: 5px;
}
.layout {
    margin-left: -3px;
}
.flat {
    display: flex;
    align-items: center;
    gap: 4px;
}
.btn {
    height: 18px;
    display: flex;
    align-items: center;
    justify-content: center;
    gap: 4px;
    background: #434343;
    border-radius: 2px;
}
.btn.on {
    background: #35496b;
    color: #eee;
}
.playbar .btn {
    flex: 1;
}
.btn.off {
    background: #292929;
    color: #777;
}

/* panels */
.workspace {
    flex: 1;
    min-height: 0;
    display: grid;
    grid-template-columns: 603fr 295fr 377fr;
    gap: 2px;
}
.column {
    display: grid;
    gap: 2px;
    min-width: 0;
    min-height: 0;
}
.left {
    grid-template-rows: 343fr 325fr;
}
.middle {
    grid-template-rows: 446fr 222fr;
}
.panel {
    min-width: 0;
    min-height: 0;
    display: flex;
    flex-direction: column;
    background: #2a2a2a;
    overflow: hidden;
}
.tabs {
    height: 21px;
    flex: none;
    display: flex;
    align-items: center;
    gap: 4px;
    padding-right: 5px;
    background: #111;
}
.tab {
    height: 21px;
    display: flex;
    align-items: center;
    gap: 4px;
    margin-right: auto;
    padding: 0 13px 0 8px;
    background: #2e2e2e;
    border-radius: 3px 3px 0 0;
}
.game .tab {
    padding-left: 5px;
}
.tab.focused {
    border-top: 2px solid #2c5d94;
}
.scene-tools {
    height: 22px;
    flex: none;
    display: flex;
    align-items: center;
    gap: 3px;
    padding: 0 2px 0 4px;
    background: #2c2c2c;
}
.btn.text {
    padding: 0 5px 0 3px;
    gap: 4px;
}
.grip + .text {
    margin-left: 2px;
}
.grip.mid {
    margin: 0 2px 0 4px;
}
.grip.end {
    margin: 0 3px 0 auto;
}
.field {
    height: 16px;
    padding: 0 3px;
    background: #1e1e1e;
    border: 1px solid #191919;
    border-radius: 3px;
    color: #d0d0d0;
}
.snap-size {
    width: 33px;
    height: 18px;
    padding-left: 4px;
}
.pair, .strip {
    display: flex;
    gap: 1px;
}
.pair .btn {
    width: 20px;
}
.pair .drop {
    width: 12px;
}
.strip .btn {
    width: 28px;
}
.canvas {
    flex: 1;
    min-height: 0;
    position: relative;
    background: #353535;
}
.grid {
    display: block;
    width: 100%;
    height: 100%;
}
.overlay {
    position: absolute;
    background: #0b0b0b;
    border-radius: 3px;
}
.tools {
    left: 1px;
    top: 2px;
    width: 37px;
    padding: 5px 2px 4px;
    display: flex;
    flex-direction: column;
    gap: 1px;
}
.tools .handle {
    align-self: center;
}
.tools .view {
    height: 31px;
    padding-top: 4px;
    justify-content: center;
}
.tools .btn {
    height: 17px;
}
.modes {
    left: 1px;
    bottom: 2px;
    height: 22px;
    padding: 2px 2px 2px 5px;
    display: flex;
    align-items: center;
    gap: 1px;
}
.modes .grip {
    margin-right: 3px;
}
.modes .btn {
    width: 28px;
}
.cameras {
    right: 2px;
    bottom: 2px;
    width: 217px;
    height: 156px;
    padding: 0 2px 10px;
    display: flex;
    flex-direction: column;
}
.cameras-title {
    height: 17px;
    display: flex;
    align-items: center;
    gap: 6px;
    padding-left: 2px;
    color: #979797;
    font-size: 13px;
}
.cameras-title .ico {
    color: #d0d0d0;
    margin-right: -3px;
}
.cameras-tools {
    height: 28px;
    display: flex;
    gap: 3px;
    padding: 1px 1px 0 2px;
}
.pick {
    flex: 1;
    padding: 0 5px 0 3px;
}
.pick-name {
    flex: 1;
}
.wide {
    width: 28px;
}
.preview, .game-view {
    flex: 1;
    display: flex;
    align-items: center;
    justify-content: center;
    background: #273b64;
}
.hexagon {
    width: 29px;
    height: 25px;
    background: #8fe648;
    clip-path: polygon(25% 0, 75% 0, 100% 50%, 75% 100%, 25% 100%, 0 50%);
}
.hexagon.tiny {
    width: 10px;
    height: 9px;
}

/* drop-downs */
.select {
    display: grid;
    align-items: center;
    min-width: 0;
}
.select select {
    grid-area: 1 / 1;
    width: 100%;
    height: 100%;
    padding: 0 14px 0 3px;
    appearance: none;
    text-overflow: ellipsis;
}
.select::after {
    content: "";
    grid-area: 1 / 1;
    justify-self: end;
    width: 7px;
    height: 4px;
    margin-right: 4px;
    background: #c0c0c0;
    clip-path: polygon(0 0, 100% 0, 50% 100%);
    pointer-events: none;
}
.select.box {
    height: 14px;
    background: #404040;
    border-radius: 2px;
    color: #d4d4d4;
}
.game-tools {
    height: 18px;
    flex: none;
    display: flex;
    background: #2c2c2c;
    overflow: hidden;
}
.game-tools .select, .cell, .zoom {
    flex: none;
    border-right: 1px solid #1f1f1f;
}
.w-game {
    width: 79px;
}
.w-game select {
    padding-left: 2px;
}
.w-display {
    width: 74px;
}
.w-display select {
    padding-left: 7px;
}
.w-aspect {
    width: 140px;
}
.w-focus {
    width: 97px;
}
.zoom {
    width: 104px;
    display: flex;
    align-items: center;
    gap: 5px;
    padding-left: 4px;
}
.zoom input {
    width: 26px;
    height: 9px;
    appearance: none;
    background: linear-gradient(#555, #555) center / 100% 1px no-repeat;
}
.zoom input::-webkit-slider-thumb {
    appearance: none;
    width: 9px;
    height: 9px;
    border-radius: 50%;
    background: #8a8a8a;
}
.cell {
    width: 23px;
    display: flex;
    align-items: center;
    justify-content: center;
}
.cell.stats {
    width: 34px;
}
.cell.gizmos {
    width: 50px;
    padding-left: 2px;
    justify-content: flex-start;
}

/* hierarchy and project */
.search-tools {
    height: 17px;
    flex: none;
    display: flex;
    align-items: stretch;
    background: #2c2c2c;
}
.hierarchy .search-tools {
    padding-right: 3px;
}
.add {
    width: 37px;
    padding-left: 5px;
}
.search {
    flex: 1;
    min-width: 0;
    height: 15px;
    align-self: center;
    display: flex;
    align-items: center;
    gap: 4px;
    padding: 0 2px 0 4px;
    background: #1e1e1e;
    border-radius: 3px;
}
.search input {
    flex: 1;
}
.search input::placeholder {
    color: #666;
}
.ruled {
    height: 18px;
    border-bottom: 1px solid #1d1d1d;
}
.ruled .search {
    margin: 0 2px 0 6px;
}
.cell.plus {
    width: 24px;
}
.cell.count {
    width: 36px;
    gap: 2px;
    border-right: 0;
}
.count .ico {
    color: #666;
}
.tree {
    flex: 1;
    list-style: none;
}
.tree li {
    height: 14px;
    display: flex;
    align-items: center;
    gap: 3px;
}
.objects {
    background: linear-gradient(90deg, #262626 28px, #2b2b2b 28px);
}
.objects .root {
    padding: 0 4px 0 30px;
    background: #1f1f1f;
    font-weight: 600;
}
.root .name {
    flex: 1;
    color: #d4d4d4;
}
.objects .child {
    padding-left: 53px;
}
.objects .selected {
    background: linear-gradient(90deg, #333 28px, #3b3b3b 28px);
}
.assets {
    padding: 3px 0 0 4px;
}
.assets .bold {
    font-weight: 600;
    color: #d4d4d4;
}
.assets .l1 {
    padding-left: 23px;
}
.assets .l2 {
    padding-left: 35px;
}
.assets .l1 .fold {
    margin: 0 1px 0 -12px;
}
.project-foot {
    height: 18px;
    background: #303030;
}

/* inspector */
.object-head {
    height: 51px;
    flex: none;
    display: flex;
    gap: 3px;
    padding: 7px 4px 0 5px;
    background: #2e2e2e;
}
.object-icon {
    width: 26px;
}
.object-icon .caret {
    display: block;
    margin-left: 17px;
    height: 4px;
}
.object-rows {
    flex: 1;
    min-width: 0;
    display: grid;
    grid-template-rows: 16px 14px;
    gap: 6px;
    align-content: start;
}
.object-row {
    display: flex;
    align-items: center;
}
.tick {
    flex: none;
    width: 12px;
    height: 12px;
    appearance: none;
    display: grid;
    place-items: center;
    background: #1f1f1f;
    border-radius: 2px;
}
.tick:checked::before {
    content: "";
    width: 8px;
    height: 7px;
    background: #eee;
    clip-path: polygon(0 55%, 15% 42%, 38% 68%, 85% 0, 100% 12%, 40% 100%);
}
.object-row > .tick {
    margin: 0 5px;
}
.object-row .name {
    flex: 1;
    padding-left: 2px;
    font-weight: 500;
}
.static {
    display: flex;
    align-items: center;
    gap: 4px;
    margin: 0 11px 0 4px;
}
.object-row > .caret {
    height: 4px;
    margin-right: 1px;
}
.tag-label {
    width: 23px;
}
.w-tag {
    width: 141px;
}
.layer-label {
    margin: 0 4px 0 12px;
}
.grow {
    flex: 1;
}
.comp-head {
    height: 18px;
    flex: none;
    display: flex;
    align-items: center;
    gap: 4px;
    padding: 0 4px 0 5px;
    background: #303030;
    border-top: 1px solid #1a1a1a;
}
.comp-head .tick-gap {
    width: 14px;
}
.comp-head h3 {
    flex: 1;
    font-weight: 600;
    color: #d4d4d4;
}
.comp-head h3 ~ .ico {
    margin-left: 3px;
}
.comp-body {
    flex: none;
    padding: 4px 4px 8px 16px;
}
.prop {
    height: 17px;
    display: grid;
    grid-template-columns: 137px 1fr;
    align-items: center;
}
.prop.tall, .subhead {
    height: 18px;
}
.prop.sub label {
    padding-left: 13px;
}
.linked {
    display: flex;
    justify-content: space-between;
    align-items: center;
    padding-right: 8px;
}
.vector {
    display: grid;
    grid-template-columns: repeat(3, 1fr);
    gap: 4px;
}
.vector label {
    display: grid;
    grid-template-columns: 12px 1fr;
    align-items: center;
}
.vector .field {
    width: 100%;
}
.object-field, .color-field, .flip, .flip label {
    display: flex;
    align-items: center;
}
.object-field {
    height: 16px;
    gap: 1px;
    padding: 0 2px;
    background: #1e1e1e;
    border-radius: 3px;
    color: #d0d0d0;
}
.object-field span {
    flex: 1;
}
.btn.bar {
    width: 100%;
    height: 15px;
    margin: 1px 0 6px;
    color: #e0e0e0;
}
.color-field {
    gap: 2px;
}
.color-field input {
    flex: 1;
    height: 15px;
    appearance: none;
    border: 1px solid #161616;
    background: #fff;
}
.color-field input::-webkit-color-swatch-wrapper {
    padding: 0 0 2px;
}
.color-field input::-webkit-color-swatch {
    border: 0;
}
.flip {
    gap: 4px;
}
.flip label {
    gap: 3px;
}
.subhead {
    display: flex;
    align-items: center;
    gap: 5px;
    margin-left: -12px;
    font-weight: 600;
    color: #d0d0d0;
}
.material {
    height: 56px;
    flex: none;
    display: flex;
    gap: 5px;
    padding: 4px 4px 0 5px;
    background: linear-gradient(#2d2d2d 47px, #222 47px, #222 48px, #2a2a2a 48px);
    border-top: 1px solid #222;
    color: #707070;
}
.material-side {
    width: 37px;
    display: flex;
    flex-direction: column;
}
.swatch {
    width: 28px;
    height: 28px;
    margin-left: 9px;
    background: radial-gradient(#fff 13px, #3c3c3c 14px);
}
.material .fold {
    height: 9px;
}
.material-main {
    flex: 1;
    min-width: 0;
}
.material-title {
    height: 12px;
    display: flex;
    align-items: center;
    gap: 4px;
    padding-left: 1px;
    margin-right: -4px;
    color: #606060;
}
.material-title h3 {
    flex: 1;
}
.material-title .help, .material-title .dots {
    color: #d4d4d4;
}
.shader-row {
    display: flex;
    align-items: center;
    gap: 4px;
    margin-top: 7px;
}
.shader-row .select, .shader-row .btn {
    height: 14px;
    background: #353535;
    color: #8a8a8a;
}
.shader-row .select {
    flex: 1;
    margin-left: 6px;
}
.shader-row .select::after, .shader-row .caret {
    height: 4px;
    background: #8a8a8a;
}
.shader-row .select::after {
    margin-right: 3px;
}
.shader-row select {
    text-overflow: clip;
    padding-right: 10px;
}
.edit {
    width: 39px;
}
.more {
    width: 37px;
    gap: 9px;
}
.add-area {
    flex: 1;
    padding-top: 7px;
    border-top: 1px solid #191919;
}
.btn.add-component {
    width: 198px;
    height: 20px;
    margin: 0 auto;
    color: #e0e0e0;
}

/* status bar */
.statusbar {
    height: 20px;
    flex: none;
    display: flex;
    align-items: center;
    justify-content: flex-end;
    gap: 11px;
    padding-right: 5px;
    color: #d0d0d0;
}
```
